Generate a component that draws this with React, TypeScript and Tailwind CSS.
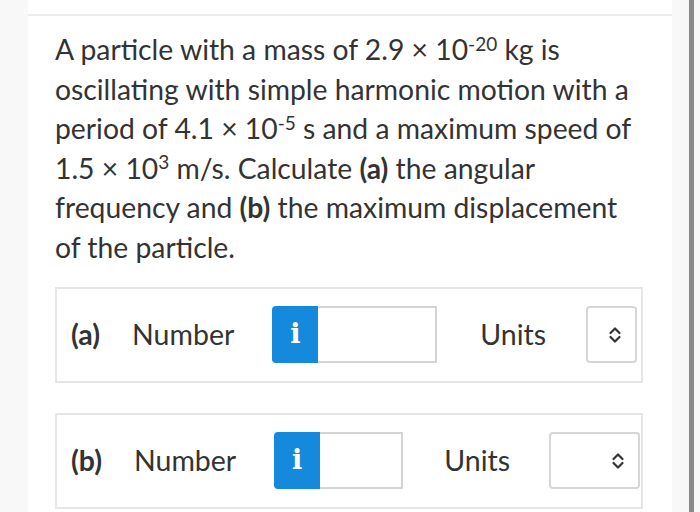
import type { ReactNode } from "react";

const font = { fontFamily: "Lato, 'Noto Sans', sans-serif" };

const UpDown = () => (
  <svg width="14" height="18" viewBox="0 0 14 18" fill="none">
    <path d="M2.5 7 L7 2.5 L11.5 7" stroke="#333" strokeWidth="2.2" strokeLinecap="round" strokeLinejoin="round" />
    <path d="M2.5 11 L7 15.5 L11.5 11" stroke="#333" strokeWidth="2.2" strokeLinecap="round" strokeLinejoin="round" />
  </svg>
);

interface AnswerRowProps {
  part: string;
  inputWidth: string;
  unitsGap: string;
  selectGap: string;
  selectWidth: string;
}

const AnswerRow = ({ part, inputWidth, unitsGap, selectGap, selectWidth }: AnswerRowProps) => (
  <div className="flex h-[96px] items-center border-2 border-[#e6e6e6] pl-[14px] text-[28.5px] text-[#333]">
    <span className="font-bold">({part})</span>
    <span className="ml-[32px]">Number</span>
    <div className="ml-[38px] flex h-[57px]">
      <div className="flex w-[46px] items-center justify-center rounded-l-[4px] bg-[#1589dc]">
        <span className="text-[27px] font-black text-white" style={{ fontFamily: "'DejaVu Serif', serif" }}>
          i
        </span>
      </div>
      <div className={`border-2 border-l-0 border-[#d4d4d4] bg-white ${inputWidth}`} />
    </div>
    <span className={unitsGap}>Units</span>
    <div
      className={`flex h-[57px] items-center justify-end rounded-[4px] border-2 border-[#d6d6d6] pr-[13px] ${selectGap} ${selectWidth}`}
    >
      <UpDown />
    </div>
  </div>
);

const Sup = ({ children }: { children: ReactNode }) => (
  <sup className="text-[19px]">{children}</sup>
);

export default function App() {
  return (
    <div className="flex h-[512px] w-[700px] bg-[#f8f8f8]" style={font}>
      <div className="ml-[28px] h-full w-[644px] overflow-hidden bg-white">
        <div className="mt-[14px] h-[2px] bg-[#ececec]" />
        <div className="pl-[27px] pr-[29px] pt-[14px]">
          <p className="text-[28.3px] leading-[39.6px] text-[#333]">
            A particle with a mass of 2.9 × 10<Sup>-20</Sup> kg is oscillating with simple harmonic motion with a
            period of 4.1 × 10<Sup>-5</Sup> s and a maximum speed of 1.5 × 10<Sup>3</Sup> m/s. Calculate{" "}
            <span className="font-bold">(a)</span> the angular frequency and <span className="font-bold">(b)</span>{" "}
            the maximum displacement of the particle.
          </p>
          <div className="mt-[19px] flex flex-col gap-[30px]">
            <AnswerRow part="a" inputWidth="w-[119px]" unitsGap="ml-[43px]" selectGap="ml-[40px]" selectWidth="w-[51px]" />
            <AnswerRow part="b" inputWidth="w-[83px]" unitsGap="ml-[41px]" selectGap="ml-[39px]" selectWidth="w-[91px]" />
          </div>
        </div>
      </div>
      <div className="ml-[17px] h-full w-[5px] bg-[#8a8a8a]" />
    </div>
  );
}
